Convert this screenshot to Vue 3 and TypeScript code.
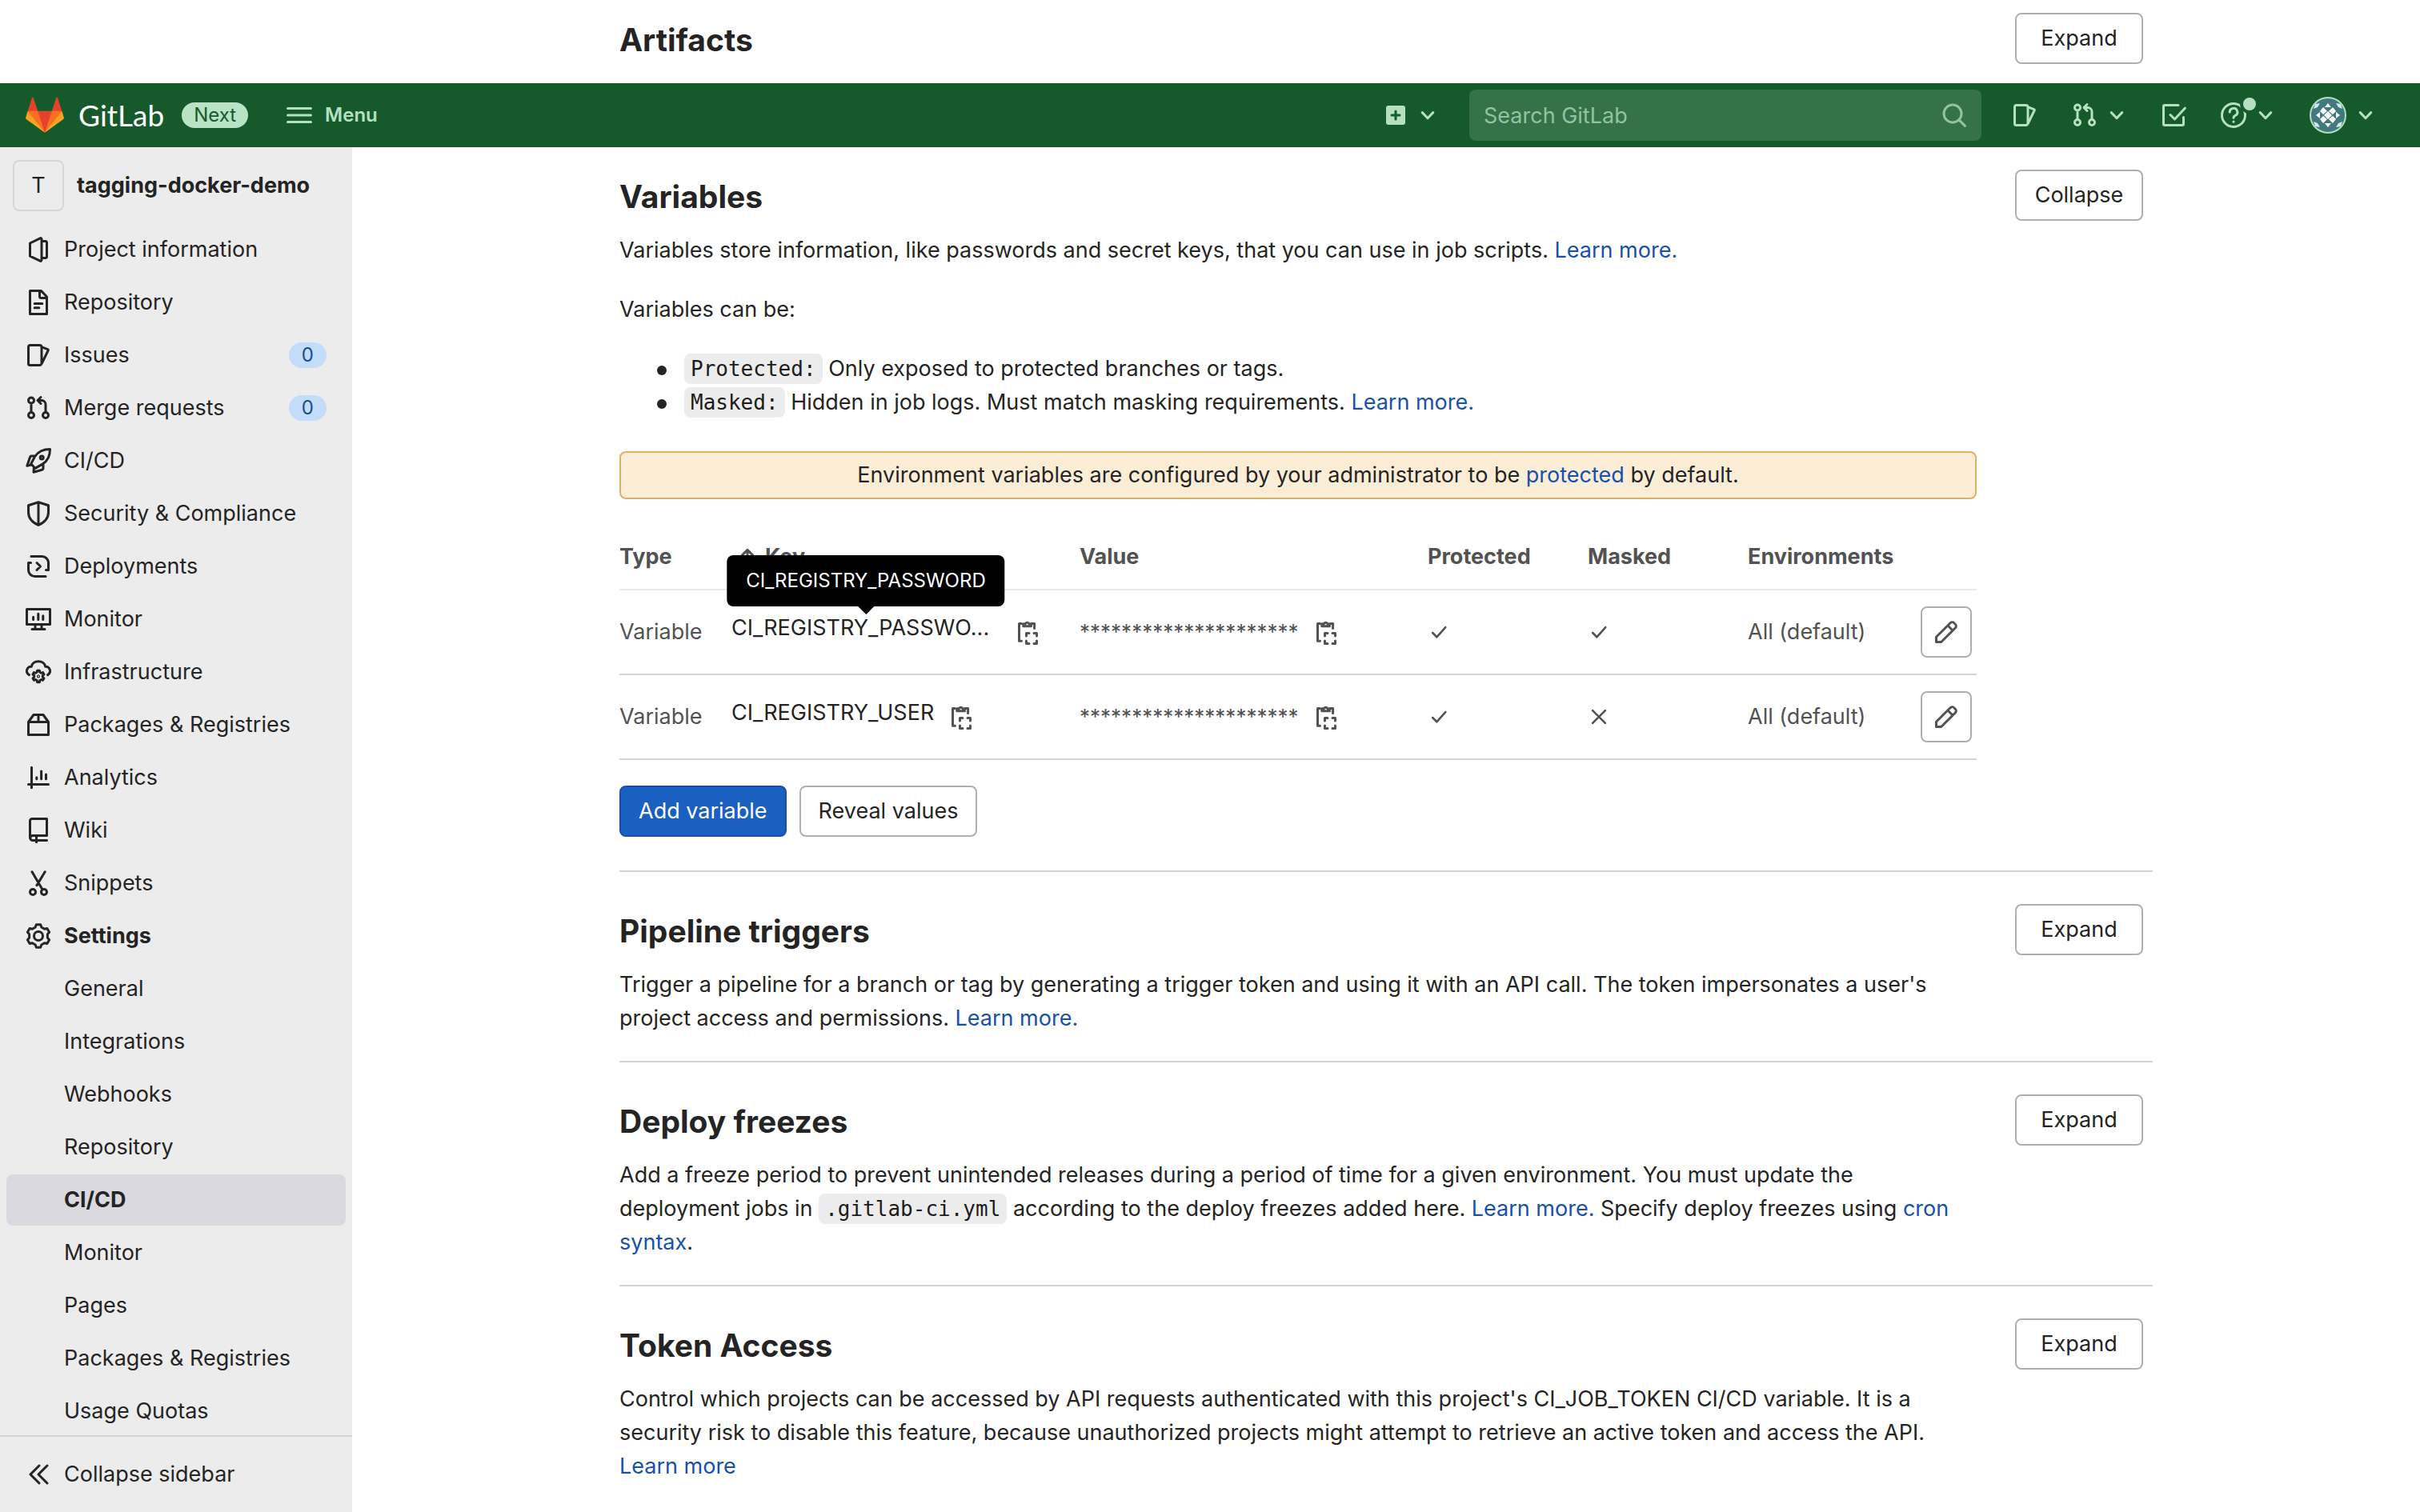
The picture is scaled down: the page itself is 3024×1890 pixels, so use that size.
<script setup lang="ts">
interface IconShape {
  d: string
}

interface NavItem {
  label: string
  icon?: string
  count?: number
  bold?: boolean
  active?: boolean
}

interface Variable {
  key: string
  label: string
  masked: boolean
  hovered: boolean
}

/** Outline of a six-toothed gear around (cx, cy). */
function gear(cx: number, cy: number, outer: number, inner: number): string {
  const points: string[] = []
  for (let tooth = 0; tooth < 6; tooth++) {
    const offsets: [number, number][] = [[-19, inner], [-11, outer], [11, outer], [19, inner]]
    for (const [offset, radius] of offsets) {
      const angle = ((tooth * 60 - 90 + offset) * Math.PI) / 180
      points.push(`${(cx + radius * Math.cos(angle)).toFixed(2)} ${(cy + radius * Math.sin(angle)).toFixed(2)}`)
    }
  }
  return `M${points.join('L')}z`
}

const circle = (cx: number, cy: number, r: number): string =>
  `M${cx - r} ${cy}a${r} ${r} 0 1 0 ${2 * r} 0a${r} ${r} 0 1 0 ${-2 * r} 0z`

const icons: Record<string, IconShape> = {
  project: { d: 'M2.75 4v8.1l6.3 3a.65.65 0 0 0 .95-.6v-13a.65.65 0 0 0-.95-.6zM10 2.75h2.5a.75.75 0 0 1 .75.75v9a.75.75 0 0 1-.75.75H10' },
  repository: { d: 'M2.75.75h7l3.5 3.75v10.75H2.75zM8.75.9v3.35a1 1 0 0 0 1 1h3.3M5.6 8.75h4.8M5.6 11.4h2.8' },
  issues: { d: 'M2.75 1.75h6a1.25 1.25 0 0 1 1.25 1.25v10a1.25 1.25 0 0 1-1.25 1.25h-6a1 1 0 0 1-1-1V2.75a1 1 0 0 1 1-1zM10.2 2.9l3.6 1.4a.5.5 0 0 1 .3.7L10.2 13' },
  merge: { d: `${circle(3.5, 3.25, 1.75)}${circle(3.5, 12.5, 1.75)}${circle(12.5, 12.5, 1.75)}M3.5 5v5.5M9.5 1.25l-2 2 2 2M7.75 3.25h2.25a2.5 2.5 0 0 1 2.5 2.5v5` },
  rocket: { d: `M15.25.75c0 4.5-1.2 7.2-4.7 9.3L6 12.7 3.4 9.9l2.4-4.6C8 2 11 .75 15.25.75zM6 5H3.7a1 1 0 0 0-.95.7L.9 11.1l2.6-.6M11 10.1v2.5a1 1 0 0 1-.8 1L5 15.1l.2-2.7${circle(10.1, 6, 1)}` },
  shield: { d: 'M8 .9l6.25 2v4.2c0 3.5-2.5 6.4-6.25 8.1-3.75-1.7-6.25-4.6-6.25-8.1V2.9zM8 1v14' },
  deployments: { d: 'M3.5 1.75h6.75a4 4 0 0 1 4 4v4.5h-1.5M12.5 14.25H5.75a4 4 0 0 1-4-4v-4.5h1.5M7 5.75L9.25 8 7 10.25' },
  monitor: { d: 'M.75 1.75h14.5v9.5H.75zM6 11.5V14M10 11.5V14M4 14.25h8M4.8 6.6v1.6M7.9 4.6v3.6M10.9 5.9v2.3' },
  cloud: { d: `M2.2 9.8C.9 9 .4 7.6.95 6.3c.5-1.2 1.6-1.75 2.7-1.65C4 2.7 5.7 1.35 8 1.35s4 1.35 4.35 3.3c1.1-.1 2.2.45 2.7 1.65.55 1.3.05 2.7-1.25 3.5${gear(8, 10.7, 3.7, 2.7)}${circle(8, 10.7, 0.3)}` },
  package: { d: 'M1.75 6.25v8h12.5v-8L11 1.75H5zM2 6.25h12M8 2v4' },
  chart: { d: 'M3.75 1.6v12.8M1.75 12.25h12.5M6.9 7.9v1M9.8 4v4.9M12.75 6v2.9' },
  book: { d: 'M2.75 12.9V2a1.25 1.25 0 0 1 1.25-1.25h9.25v10.5H4.4a1.5 1.5 0 0 0 0 3h8.85M6.75 12v3.4' },
  scissors: { d: `${circle(4.5, 13.5, 1.75)}${circle(11.5, 13.5, 1.75)}M4 .9l6.4 10.9M12.1.9L7 9.3` },
  gear: { d: `${gear(8, 8, 7.2, 5.8)}${circle(8, 8, 2.75)}` },
  collapse: { d: 'M8.5 2.5L3 8l5.5 5.5M13.5 2.5L8 8l5.5 5.5' },
  chevron: { d: 'M3.5 5.75L8 10.5l4.5-4.75' },
  search: { d: `${circle(7, 7, 5.5)}M11.2 11.2l3.5 3.5` },
  todo: { d: 'M11 1.75H2.5a.75.75 0 0 0-.75.75v11c0 .4.35.75.75.75h11c.4 0 .75-.35.75-.75V9.25M6 7.75l2.75 2.75 6.4-6.9' },
  help: { d: `${circle(8, 8, 7.25)}M5.6 6.1a2.4 2.4 0 1 1 3.5 2.1C8.4 8.6 8 8.9 8 9.6M8 12v.1` },
  clipboard: { d: 'M4.2 2.75H2.75v10.9h1.5M10.8 2.75h1.5v3M5.4 4.4V2.9h1.2a1.3 1.3 0 0 1 2.4 0h1.2v1.5zM7.25 10.5V8.75H9M12 8.75h1.75v1.75M13.75 13.5v1.75H12M9 15.25H7.25V13.5' },
  check: { d: 'M3.5 8.6l3 3 6.2-7' },
  close: { d: 'M3.5 3.5l9 9M12.5 3.5l-9 9' },
  pencil: { d: 'M1.75 14.25v-3.1l8.9-8.9a1.5 1.5 0 0 1 2.1 0l1 1a1.5 1.5 0 0 1 0 2.1l-8.9 8.9zM9 4l3 3' },
  arrowUp: { d: 'M8 14V2.5M3.5 6.75L8 2.25l4.5 4.5' },
  menu: { d: 'M.75 3.75h14.5M.75 8h14.5M.75 12.25h14.5' },
}

const navItems: NavItem[] = [
  { label: 'Project information', icon: 'project' },
  { label: 'Repository', icon: 'repository' },
  { label: 'Issues', icon: 'issues', count: 0 },
  { label: 'Merge requests', icon: 'merge', count: 0 },
  { label: 'CI/CD', icon: 'rocket' },
  { label: 'Security & Compliance', icon: 'shield' },
  { label: 'Deployments', icon: 'deployments' },
  { label: 'Monitor', icon: 'monitor' },
  { label: 'Infrastructure', icon: 'cloud' },
  { label: 'Packages & Registries', icon: 'package' },
  { label: 'Analytics', icon: 'chart' },
  { label: 'Wiki', icon: 'book' },
  { label: 'Snippets', icon: 'scissors' },
  { label: 'Settings', icon: 'gear', bold: true },
  { label: 'General' },
  { label: 'Integrations' },
  { label: 'Webhooks' },
  { label: 'Repository' },
  { label: 'CI/CD', bold: true, active: true },
  { label: 'Monitor' },
  { label: 'Pages' },
  { label: 'Packages & Registries' },
  { label: 'Usage Quotas' },
]

const variables: Variable[] = [
  { key: 'CI_REGISTRY_PASSWORD', label: 'CI_REGISTRY_PASSWO...', masked: true, hovered: true },
  { key: 'CI_REGISTRY_USER', label: 'CI_REGISTRY_USER', masked: false, hovered: false },
]

const hiddenValue = '*'.repeat(21)
</script>

<template>
  <div class="page">
    <div class="strip">
      <div class="container">
        <header class="section-head">
          <h2>Artifacts</h2>
          <button type="button" class="btn toggle">Expand</button>
        </header>
      </div>
    </div>

    <header class="navbar">
      <a href="#" class="brand" aria-label="GitLab">
        <svg class="tanuki" viewBox="0 0 36 36" aria-hidden="true">
          <path fill="#e24329" d="M2 14l9.38 9v-9l-4-12.28c-.205-.632-1.176-.632-1.38 0z" />
          <path fill="#e24329" d="M34 14l-9.38 9v-9l4-12.28c.205-.632 1.176-.632 1.38 0z" />
          <path fill="#e24329" d="M18 34.38L3 14h30z" />
          <path fill="#fc6d26" d="M18 34.38L11.38 14H2l4 11z" />
          <path fill="#fc6d26" d="M18 34.38L24.62 14H34l-4 11z" />
          <path fill="#fca326" d="M2 14L.1 20.16c-.18.565 0 1.2.5 1.56l17.42 12.66z" />
          <path fill="#fca326" d="M34 14l1.9 6.16c.18.565 0 1.2-.5 1.56L18 34.38z" />
        </svg>
        <span class="wordmark">GitLab</span>
      </a>
      <a href="#" class="next">Next</a>
      <button type="button" class="nav-btn menu">
        <svg class="icon" viewBox="0 0 16 16" aria-hidden="true"><path :d="icons.menu.d" /></svg>
        Menu
      </button>

      <button type="button" class="nav-btn create" aria-label="Create new">
        <svg class="plus" viewBox="0 0 16 16" aria-hidden="true">
          <rect x="2" y="2" width="12" height="12" rx="1.5" />
          <path d="M8 5.5v5M5.5 8h5" />
        </svg>
        <svg class="icon small" viewBox="0 0 16 16" aria-hidden="true"><path :d="icons.chevron.d" /></svg>
      </button>
      <label class="search">
        <input type="text" placeholder="Search GitLab" aria-label="Search GitLab" />
        <svg class="icon" viewBox="0 0 16 16" aria-hidden="true"><path :d="icons.search.d" /></svg>
      </label>
      <div class="tools">
        <button type="button" class="nav-btn" aria-label="Issues">
          <svg class="icon" viewBox="0 0 16 16" aria-hidden="true"><path :d="icons.issues.d" /></svg>
        </button>
        <button type="button" class="nav-btn" aria-label="Merge requests">
          <svg class="icon" viewBox="0 0 16 16" aria-hidden="true"><path :d="icons.merge.d" /></svg>
          <svg class="icon small" viewBox="0 0 16 16" aria-hidden="true"><path :d="icons.chevron.d" /></svg>
        </button>
        <button type="button" class="nav-btn" aria-label="To-Do List">
          <svg class="icon" viewBox="0 0 16 16" aria-hidden="true"><path :d="icons.todo.d" /></svg>
        </button>
        <button type="button" class="nav-btn help" aria-label="Help">
          <svg class="icon" viewBox="0 0 16 16" aria-hidden="true"><path :d="icons.help.d" /></svg>
          <span class="dot"></span>
          <svg class="icon small" viewBox="0 0 16 16" aria-hidden="true"><path :d="icons.chevron.d" /></svg>
        </button>
        <button type="button" class="nav-btn" aria-label="User menu">
          <svg class="avatar" viewBox="0 0 46 46" aria-hidden="true">
            <circle cx="23" cy="23" r="22" fill="#41797f" />
            <path fill="#fff" d="M23 8l4 5h-8zM23 38l4-5h-8zM8 23l5-4v8zM38 23l-5-4v8z" />
            <path fill="#fff" d="M17 13l5 5-5 4-4-4zM29 13l4 5-4 4-5-4zM17 24l5 4-5 5-4-5zM29 24l4 4-4 5-5-5zM23 18l5 5-5 5-5-5z" />
            <path fill="#d5e8e4" d="M7 9l6-1-3 5-5 2zM39 9l-6-1 3 5 5 2zM7 37l6 1-3-5-5-2zM39 37l-6 1 3-5 5-2z" />
            <circle cx="23" cy="23" r="22" fill="none" stroke="#b3dfc1" stroke-width="2" />
          </svg>
          <svg class="icon small" viewBox="0 0 16 16" aria-hidden="true"><path :d="icons.chevron.d" /></svg>
        </button>
      </div>
    </header>

    <div class="body">
      <aside class="sidebar">
        <a href="#" class="project">
          <span class="project-avatar">T</span>
          <span class="project-name">tagging-docker-demo</span>
        </a>
        <nav aria-label="Project navigation">
          <ul class="nav-list">
            <li v-for="(item, index) in navItems" :key="index">
              <a href="#" class="nav-item" :class="{ bold: item.bold, active: item.active }">
                <svg v-if="item.icon" class="icon" viewBox="0 0 16 16" aria-hidden="true">
                  <path :d="icons[item.icon].d" />
                </svg>
                <span v-else class="icon-space"></span>
                <span class="nav-label">{{ item.label }}</span>
                <span v-if="item.count !== undefined" class="count">{{ item.count }}</span>
              </a>
            </li>
          </ul>
        </nav>
        <button type="button" class="collapse">
          <svg class="icon" viewBox="0 0 16 16" aria-hidden="true"><path :d="icons.collapse.d" /></svg>
          Collapse sidebar
        </button>
      </aside>

      <main class="container">
        <section class="first">
          <header class="section-head">
            <h2>Variables</h2>
            <button type="button" class="btn toggle">Collapse</button>
          </header>
          <p>
            Variables store information, like passwords and secret keys, that you can use in job scripts.
            <a href="#">Learn more.</a>
          </p>
          <p class="spaced">Variables can be:</p>
          <ul class="kinds">
            <li><code>Protected:</code> Only exposed to protected branches or tags.</li>
            <li>
              <code>Masked:</code> Hidden in job logs. Must match masking requirements.
              <a href="#">Learn more.</a>
            </li>
          </ul>
          <div class="notice">
            Environment variables are configured by your administrator to be <a href="#">protected</a> by default.
          </div>

          <table>
            <colgroup>
              <col class="c-type" />
              <col class="c-wide" />
              <col class="c-wide" />
              <col class="c-flag" />
              <col class="c-flag" />
              <col class="c-env" />
              <col />
            </colgroup>
            <thead>
              <tr>
                <th scope="col">Type</th>
                <th scope="col">
                  <span class="sort">
                    <svg class="icon small" viewBox="0 0 16 16" aria-hidden="true"><path :d="icons.arrowUp.d" /></svg>
                    Key
                  </span>
                </th>
                <th scope="col">Value</th>
                <th scope="col">Protected</th>
                <th scope="col">Masked</th>
                <th scope="col">Environments</th>
                <th scope="col" aria-label="Actions"></th>
              </tr>
            </thead>
            <tbody>
              <tr v-for="variable in variables" :key="variable.key">
                <td>Variable</td>
                <td>
                  <div class="value-cell">
                    <span class="key" :class="{ clipped: variable.hovered }">
                      {{ variable.label }}
                      <span v-if="variable.hovered" class="tooltip" role="tooltip">{{ variable.key }}</span>
                    </span>
                    <button type="button" class="copy" aria-label="Copy key">
                      <svg class="icon" viewBox="0 0 16 16" aria-hidden="true"><path :d="icons.clipboard.d" /></svg>
                    </button>
                  </div>
                </td>
                <td>
                  <div class="value-cell">
                    <span class="stars">{{ hiddenValue }}</span>
                    <button type="button" class="copy" aria-label="Copy value">
                      <svg class="icon" viewBox="0 0 16 16" aria-hidden="true"><path :d="icons.clipboard.d" /></svg>
                    </button>
                  </div>
                </td>
                <td>
                  <svg class="icon mark" viewBox="0 0 16 16" role="img" aria-label="Yes"><path :d="icons.check.d" /></svg>
                </td>
                <td>
                  <svg class="icon mark" viewBox="0 0 16 16" role="img" :aria-label="variable.masked ? 'Yes' : 'No'">
                    <path :d="variable.masked ? icons.check.d : icons.close.d" />
                  </svg>
                </td>
                <td>All (default)</td>
                <td>
                  <button type="button" class="btn edit" aria-label="Edit">
                    <svg class="icon" viewBox="0 0 16 16" aria-hidden="true"><path :d="icons.pencil.d" /></svg>
                  </button>
                </td>
              </tr>
            </tbody>
          </table>

          <div class="actions">
            <button type="button" class="btn primary">Add variable</button>
            <button type="button" class="btn">Reveal values</button>
          </div>
        </section>

        <section>
          <header class="section-head">
            <h2>Pipeline triggers</h2>
            <button type="button" class="btn toggle">Expand</button>
          </header>
          <p>
            Trigger a pipeline for a branch or tag by generating a trigger token and using it with an API call. The
            token impersonates a user's project access and permissions. <a href="#">Learn more.</a>
          </p>
        </section>

        <section>
          <header class="section-head">
            <h2>Deploy freezes</h2>
            <button type="button" class="btn toggle">Expand</button>
          </header>
          <p>
            Add a freeze period to prevent unintended releases during a period of time for a given environment. You
            must update the deployment jobs in <code>.gitlab-ci.yml</code> according to the deploy freezes added here.
            <a href="#">Learn more.</a> Specify deploy freezes using <a href="#">cron syntax</a>.
          </p>
        </section>

        <section>
          <header class="section-head">
            <h2>Token Access</h2>
            <button type="button" class="btn toggle">Expand</button>
          </header>
          <p>
            Control which projects can be accessed by API requests authenticated with this project's CI_JOB_TOKEN
            CI/CD variable. It is a security risk to disable this feature, because unauthorized projects might attempt
            to retrieve an active token and access the API. <a href="#">Learn more</a>
          </p>
        </section>
      </main>
    </div>
  </div>
</template>

<style>
body {
  margin: 0;
  background: #fff;
}
</style>

<style scoped>
* {
  box-sizing: border-box;
}

.page {
  display: flex;
  flex-direction: column;
  min-height: 100vh;
  font: 27px/42px Inter, "Liberation Sans", sans-serif;
  color: #242424;
}

a {
  color: #1750ad;
  text-decoration: none;
}

button,
input {
  font: inherit;
  color: inherit;
}

button {
  border: 0;
  padding: 0;
  background: none;
}

h2,
p,
ul {
  margin: 0;
  padding: 0;
}

.icon {
  flex: none;
  display: block;
  width: 32px;
  height: 32px;
  fill: none;
  stroke: currentColor;
  stroke-width: 1.5;
  stroke-linecap: round;
  stroke-linejoin: round;
}

.icon.small {
  width: 24px;
  height: 24px;
  stroke-width: 2;
}

.strip {
  height: 104px;
  padding: 16px 0 0 440px;
}

.container {
  flex: 1;
  max-width: 1980px;
  margin: 0 auto;
  padding: 0 32px;
}

/* Top bar */
.navbar {
  display: flex;
  align-items: center;
  height: 80px;
  padding: 0 56px 0 32px;
  background: #165a2b;
  color: #b5e0c2;
}

.brand {
  display: flex;
  align-items: center;
  gap: 18px;
  color: #fff;
}

.tanuki {
  width: 48px;
  height: 48px;
}

.wordmark {
  font-family: Lato, sans-serif;
  font-size: 37px;
}

.next {
  margin-left: 22px;
  padding: 0 15px;
  border-radius: 16px;
  background: #b8e4c5;
  color: #165a2b;
  font-size: 24px;
  line-height: 32px;
}

.nav-btn {
  display: flex;
  align-items: center;
  gap: 12px;
}

.menu {
  gap: 16px;
  margin-left: 48px;
  font-size: 24px;
  font-weight: 600;
}

.create {
  margin-left: auto;
}

.plus {
  width: 32px;
  height: 32px;
  fill: currentColor;
}

.plus path {
  stroke: #165a2b;
  stroke-width: 1.5;
  stroke-linecap: round;
}

.search {
  display: flex;
  align-items: center;
  width: 640px;
  height: 64px;
  margin: 0 38px 0 40px;
  padding: 0 18px;
  border-radius: 8px;
  background: #367248;
  color: #93c3a1;
}

.search input {
  flex: 1;
  min-width: 0;
  padding: 2px 0 0;
  border: 0;
  outline: 0;
  background: none;
}

.search input::placeholder {
  color: #93c3a1;
  opacity: 1;
}

.tools {
  display: flex;
  align-items: center;
  gap: 43px;
}

.help {
  position: relative;
}

.dot {
  position: absolute;
  top: -10px;
  left: 24px;
  width: 24px;
  height: 24px;
  border: 4px solid #165a2b;
  border-radius: 50%;
  background: #b5e0c2;
}

.avatar {
  width: 46px;
  height: 46px;
}

/* Sidebar */
.body {
  display: flex;
  flex: 1;
}

.sidebar {
  display: flex;
  flex: none;
  flex-direction: column;
  width: 440px;
  padding-top: 16px;
  background: #ececec;
}

.project {
  display: flex;
  align-items: center;
  gap: 16px;
  margin: 0 16px 16px;
  color: inherit;
}

.project-avatar {
  width: 64px;
  height: 64px;
  border: 2px solid #d6d6d6;
  border-radius: 8px;
  line-height: 60px;
  text-align: center;
}

.project-name {
  font-weight: 700;
}

.nav-list {
  display: flex;
  flex-direction: column;
  gap: 2px;
  margin: 0 8px -2px;
  list-style: none;
}

.nav-item {
  display: flex;
  align-items: center;
  height: 64px;
  padding: 0 24px;
  border-radius: 8px;
  color: inherit;
}

.nav-item.bold {
  font-weight: 700;
}

.nav-item.active {
  background: #dad9df;
}

.icon-space {
  width: 32px;
}

.nav-label {
  flex: 1;
  margin-left: 16px;
}

.count {
  padding: 0 16px;
  border-radius: 16px;
  background: #c3dcf9;
  color: #1a4c92;
  font-size: 24px;
  line-height: 32px;
}

.collapse {
  display: flex;
  align-items: center;
  gap: 16px;
  height: 96px;
  margin-top: auto;
  padding: 0 32px;
  border-top: 2px solid #d3d3d3;
}

/* Content */
section {
  padding: 40px 0 32px;
}

section + section {
  border-top: 2px solid #d4d4d4;
}

.first {
  padding: 28px 0 42px;
}

.section-head {
  display: flex;
  align-items: center;
  justify-content: space-between;
  margin-right: 12px;
}

h2 {
  padding-top: 4px;
  font-size: 39px;
  font-weight: 700;
  line-height: 60px;
}

p {
  max-width: 1696px;
  margin-top: 16px;
}

.spaced {
  margin-top: 32px;
}

.btn {
  height: 64px;
  padding: 0 22px;
  border: 2px solid #b0b0b0;
  border-radius: 8px;
  background: #fff;
}

.toggle {
  width: 160px;
  padding: 0;
}

.primary {
  border-color: #164fae;
  background: #1b5fc1;
  color: #fff;
}

.kinds {
  margin-top: 32px;
  padding-left: 47px;
  list-style: none;
}

.kinds li::before {
  content: "";
  display: inline-block;
  width: 12px;
  height: 12px;
  margin-right: 22px;
  border-radius: 50%;
  background: #242424;
  vertical-align: middle;
}

code {
  padding: 4px 8px;
  border-radius: 8px;
  background: #ececec;
  color: #1c1c1c;
  font: 26px/30px "DejaVu Sans Mono", monospace;
}

.notice {
  max-width: 1696px;
  margin: 40px 0 32px;
  padding: 7px 0;
  border: 2px solid #dfb262;
  border-radius: 8px;
  background: #fcedd6;
  text-align: center;
}

table {
  width: 100%;
  max-width: 1696px;
  border-spacing: 0;
  table-layout: fixed;
  color: #525252;
}

.c-type {
  width: 140px;
}

.c-wide {
  width: 435px;
}

.c-flag {
  width: 200px;
}

.c-env {
  width: 216px;
}

th,
td {
  padding: 0;
  text-align: left;
}

th {
  height: 82px;
  border-bottom: 2px solid #ebebeb;
  font-weight: 700;
}

td {
  height: 106px;
  border-bottom: 2px solid #d4d4d4;
}

.sort {
  display: flex;
  align-items: center;
  gap: 10px;
  padding-left: 8px;
}

.value-cell {
  display: flex;
}

.key {
  position: relative;
  color: #242424;
  white-space: nowrap;
}

.clipped {
  width: 336px;
}

.stars {
  font-size: 26px;
  line-height: 52px;
}

.tooltip {
  position: absolute;
  bottom: 58px;
  left: 50%;
  padding: 11px 24px;
  border-radius: 8px;
  background: #000;
  color: #fff;
  font-size: 24px;
  transform: translateX(-50%);
}

.tooltip::after {
  content: "";
  position: absolute;
  top: 100%;
  left: 50%;
  margin-left: -10px;
  border: 10px solid transparent;
  border-top-color: #000;
  border-bottom: 0;
}

.copy {
  height: 52px;
  padding: 0 18px;
}

.edit {
  display: block;
  padding: 0 14px;
}

.mark {
  width: 28px;
  height: 28px;
}

.actions {
  display: flex;
  gap: 16px;
  margin-top: 32px;
}
</style>
